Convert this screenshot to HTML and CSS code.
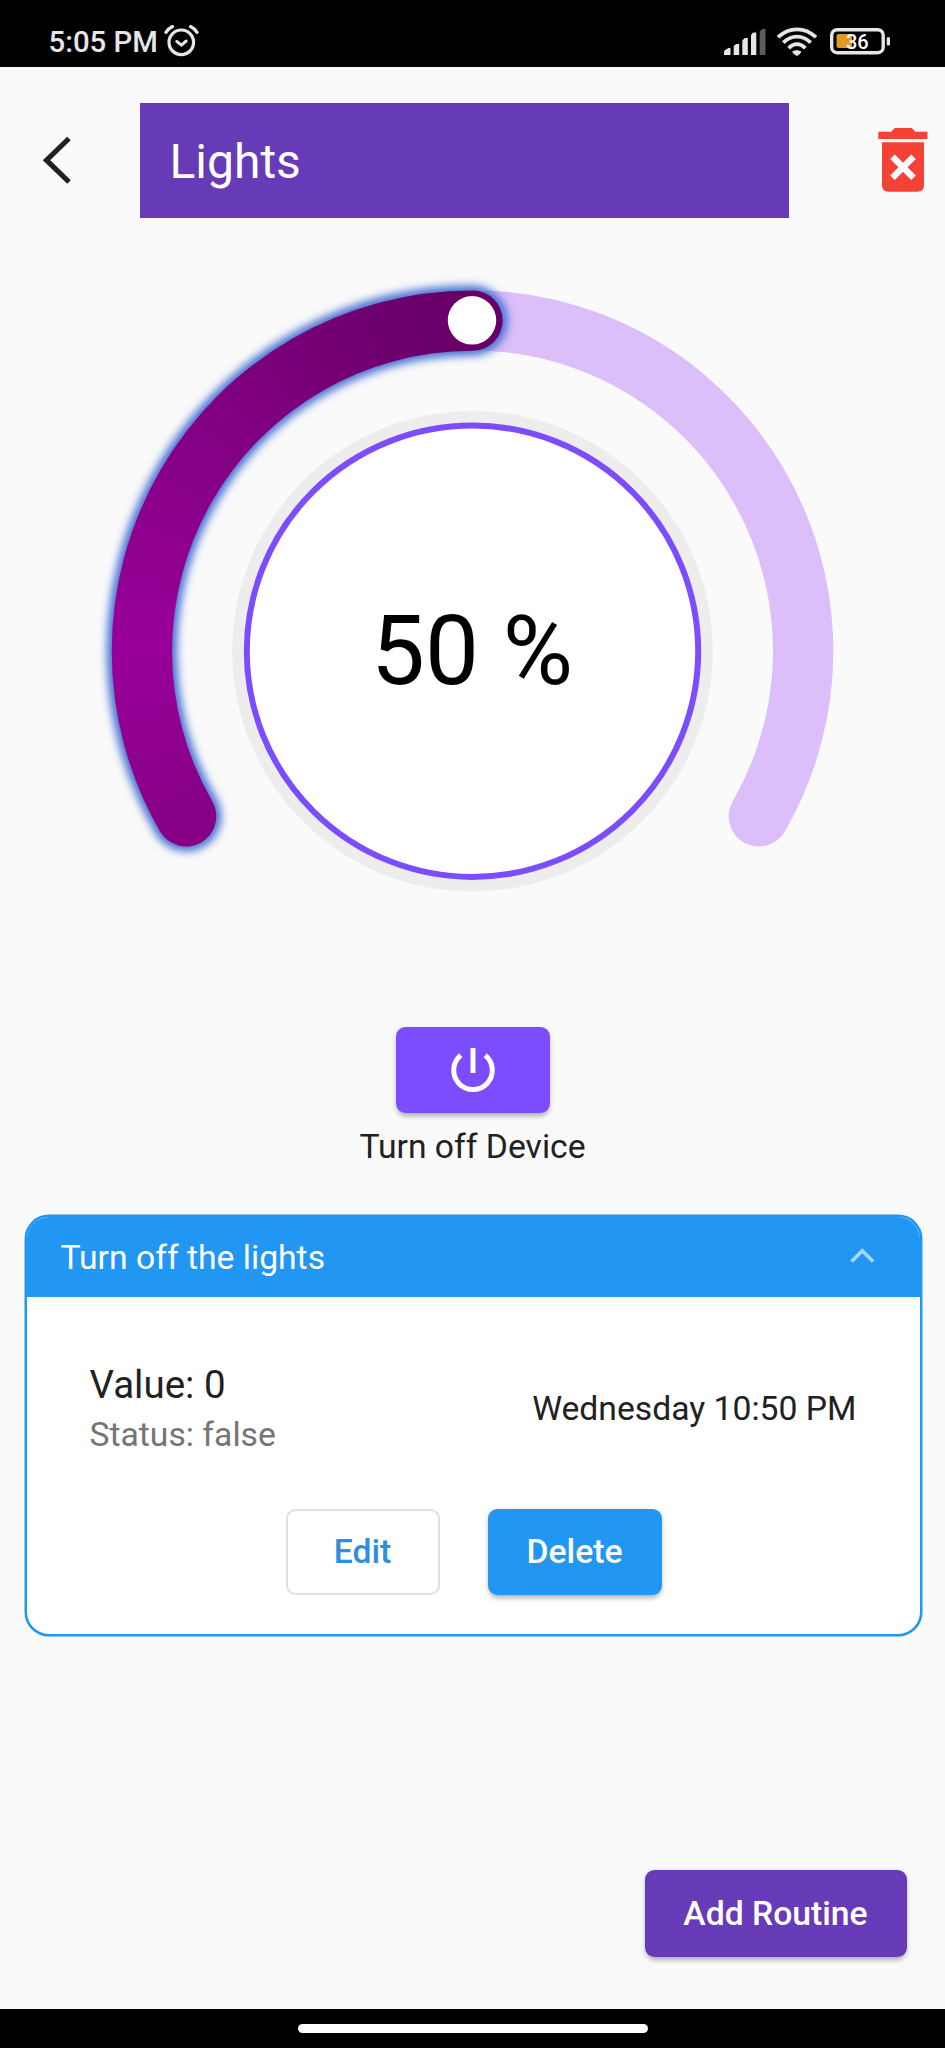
FILE: index.html
```html
<!DOCTYPE html>
<html lang="en">
<head>
<meta charset="utf-8">
<title>Lights</title>
<link rel="stylesheet" href="styles.css">
</head>
<body>
<div class="screen">
  <div class="statusbar">
    <div class="clock">
      <span class="time">5:05 PM</span>
      <svg class="alarm" width="36" height="34" viewBox="164 24 36 34" fill="none" stroke="#e6e6e6" stroke-linecap="round">
        <circle cx="181.3" cy="42.3" r="12.3" stroke-width="3.2"/>
        <path d="M166 32.3Q168.500 28.500 172.500 26.600M197 32.300Q194.500 28.500 190.500 26.600" stroke-width="3.300"/>
        <path d="M176.800 41.500l4.700 3.600 4.700-4.100" stroke-width="3"/>
      </svg>
    </div>
    <svg class="system" width="170" height="34" viewBox="722 24 170 34">
      <g fill="#e6e6e6">
        <path d="M724 55v-3q0-2 2-2.600l2.500-1.400h2v7zM733.700 55v-9l2.500-2h3v11zM742.300 55v-14.500l2.500-2.500h3v17zM751 55v-20l2-2.500h3.300v22.500z"/>
        <path d="M759.700 55v-23.500l2.500-2.500h3.300v26z" fill="#5c5c5c"/>
        <path d="M792.300 51.300l4.700-1.300 4 1.300q.5 1.700-1.500 3l-2.500 1.600-2.700-1.600q-2.300-1.300-2-3z"/>
      </g>
      <g fill="none" stroke="#e6e6e6" stroke-width="3.800">
        <path d="M778 37.200Q786.500 29.300 797 29.300T816 37.200"/>
        <path d="M783.300 42.700Q789.500 36.700 797 36.700T810.700 42.700"/>
        <path d="M788.700 48.200Q792.500 44.200 797 44.200T805.300 48.200"/>
      </g>
      <rect x="831.700" y="29.700" width="51.500" height="23" rx="5.500" fill="none" stroke="#e6e6e6" stroke-width="3.400"/>
      <rect x="836.500" y="34" width="15.500" height="14" rx="2" fill="#e39a24"/>
      <rect x="886.700" y="37" width="3.300" height="8.500" rx="1.500" fill="#e6e6e6"/>
      <text class="charge" x="857.300" y="49" text-anchor="middle">36</text>
    </svg>
  </div>

  <header class="header">
    <svg class="back" width="28" height="48" viewBox="43 136 28 48"><path d="M69 138.500L46.500 160.200 69 182" fill="none" stroke="#212121" stroke-width="5.200"/></svg>
    <h1 class="title">Lights</h1>
    <svg class="trash" width="50" height="64" viewBox="878 128 50 64">
      <path d="M878.300 131.800h13l3.500-3.700h17l3.500 3.700h12.200v7.200h-49.200z" fill="#f44336"/>
      <path d="M882 142.300h42v43q0 6.400-6.500 6.400h-29q-6.500 0-6.500-6.400z" fill="#f44336"/>
      <path d="M892.500 156.700l21 21M913.500 156.700l-21 21" stroke="#fafafa" stroke-width="6.500"/>
    </svg>
  </header>

  <section class="gauge">
    <svg class="dial" width="760" height="624" viewBox="92 270 760 624">
      <defs>
        <filter id="glow" filterUnits="userSpaceOnUse" x="92" y="270" width="440" height="620"><feGaussianBlur stdDeviation="4"/></filter>
      </defs>
      <path d="M186.200 816.300A330.600 330.600 0 1 1 758.800 816.300" fill="none" stroke="#dcbefb" stroke-width="60.300" stroke-linecap="round"/>
      <path d="M186.200 816.300A330.600 330.600 0 0 1 472.500 320.500" fill="none" stroke="#4a72d2" stroke-width="70.500" stroke-linecap="round" filter="url(#glow)"/>
      <foreignObject x="92" y="270" width="760" height="620"><div class="sweep"></div></foreignObject>
      <circle cx="472" cy="320.300" r="24.200" fill="#fff"/>
      <circle cx="472.500" cy="651.200" r="240.300" fill="#ededed"/>
      <circle cx="472.500" cy="651.200" r="225.700" fill="#fff" stroke="#7c4dff" stroke-width="6"/>
    </svg>
    <div class="percent">50 %</div>
  </section>

  <section class="power">
    <button class="btn power-btn" aria-label="Power">
      <svg width="46" height="46" viewBox="449.500 1047 46 46" fill="none" stroke="#fff" stroke-width="5">
        <path d="M472.500 1048v25"/><path d="M460.300 1055.300a19.300 19.300 0 1 0 24.400 0"/>
      </svg>
    </button>
    <div class="power-label">Turn off Device</div>
  </section>

  <article class="card">
    <div class="card-head">
      <span class="card-title">Turn off the lights</span>
      <svg width="26" height="18" viewBox="848 1248 26 18"><path d="M850.500 1261.500l10.800-10.800 10.800 10.800" fill="none" stroke="#a6dafc" stroke-width="3.600"/></svg>
    </div>
    <div class="card-row">
      <div>
        <div class="value">Value: 0</div>
        <div class="state">Status: false</div>
      </div>
      <div class="when">Wednesday 10:50 PM</div>
    </div>
    <div class="actions">
      <button class="btn edit">Edit</button>
      <button class="btn delete">Delete</button>
    </div>
  </article>

  <div class="footer"><button class="btn add">Add Routine</button></div>
  <div class="navbar"><div class="pill"></div></div>
</div>
</body>
</html>
```
FILE: styles.css
```css
* { box-sizing: border-box; }
body { margin: 0; background: #fafafa; font-family: Roboto, "Noto Sans", sans-serif; color: #212121; }
.screen { width: 945px; height: 2048px; display: flex; flex-direction: column; background: #fafafa; overflow: hidden; }
svg { display: block; flex: none; }

.statusbar { flex: none; height: 66.5px; background: #000; display: flex; justify-content: space-between; padding: 24px 53px 0 48.5px; }
.clock { display: flex; gap: 8px; }
.time { color: #e6e6e6; font-size: 29.300px; line-height: 36px; font-weight: 500; white-space: nowrap; width: 107.5px; }
.charge { font-size: 20px; font-weight: 500; fill: #fff; }

.header { flex: none; display: flex; align-items: center; height: 115px; margin-top: 36px; padding: 0 17px 0 43px; }
.title { margin: 0 0 0 68.500px; width: 649px; height: 115px; padding: 1px 0 0 30px; background: #673ab7; color: #fff; font-size: 48px; line-height: 115px; font-weight: 400; }
.trash { margin-left: auto; }

.gauge { flex: none; margin: 52px 0 0 92px; width: 760px; height: 624px; display: grid; place-items: center; }
.gauge > * { grid-area: 1 / 1; }
.sweep {
  width: 760px; height: 620px;
  background: conic-gradient(from 180deg at 380.500px 381.200px, #800080 0deg, #800080 50deg, #990099 90deg, #800080 135deg, #660066 180deg, #5c005c 360deg);
  clip-path: path("M68.08 561.58A360.75 360.75 0 0 1 380.5 20.45A30.15 30.15 0 0 1 380.5 80.75A300.45 300.45 0 0 0 120.3 531.43A30.15 30.15 0 0 1 68.08 561.58Z");
}
.percent { color: #000; font-size: 96px; line-height: 112px; padding-top: 138px; }

.power { flex: none; margin-top: 133px; display: flex; flex-direction: column; align-items: center; }
.btn { border: 0; padding: 0; display: flex; align-items: center; justify-content: center; border-radius: 9.500px; font-family: inherit; font-size: 33.700px; font-weight: 500; color: #fff; height: 86.500px; box-shadow: 0 5px 5px -2px rgba(0,0,0,.2), 0 2px 6px rgba(0,0,0,.16); }
.power-btn { width: 154px; background: #7c4dff; }
.power-label { margin-top: 14px; font-size: 33.700px; line-height: 40px; }

.card { flex: none; margin: 48px 23.500px 0 24.500px; height: 421px; border: 2.500px solid #2196f3; border-radius: 24px; background: #fff; overflow: hidden; box-shadow: 0 0 0 .5px #2196f3; }
.card-head { height: 80px; background: #2196f3; color: #fff; display: flex; align-items: center; justify-content: space-between; padding: 0 45px 0 34px; font-size: 33.700px; }
.card-row { display: flex; justify-content: space-between; align-items: center; padding: 62.5px 63px 0 63px; }
.value { font-size: 38.500px; line-height: 50px; }
.state { font-size: 33.700px; line-height: 48px; margin-top: 1px; color: #757575; }
.when { font-size: 33.700px; line-height: 40px; margin-top: -1px; }
.actions { display: flex; justify-content: center; gap: 48px; margin-top: 50px; padding-left: 1px; }
.edit { width: 154px; background: #fff; color: #2f8fde; border: 2.400px solid #e0e0e0; box-shadow: none; }
.delete { width: 174px; background: #2196f3; }

.footer { flex: none; margin-top: auto; display: flex; justify-content: flex-end; padding: 0 38.500px 52.500px 0; }
.add { width: 262px; background: #673ab7; }
.navbar { flex: none; height: 39px; background: #000; display: flex; justify-content: center; padding-top: 15px; }
.pill { width: 350px; height: 9px; border-radius: 5px; background: #fff; }
```
